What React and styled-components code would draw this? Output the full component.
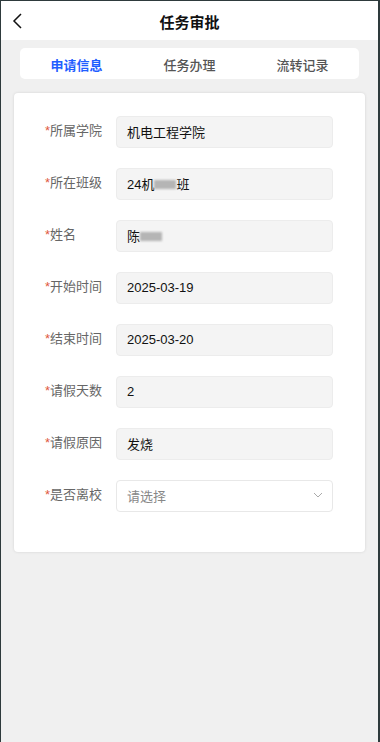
import React from "react";
import styled, { createGlobalStyle } from "styled-components";

const Global = createGlobalStyle`
  html, body { margin: 0; padding: 0; background: #2e3a3c; }
  body { font-family: "Liberation Sans", "Noto Sans CJK SC", sans-serif; }
  * { box-sizing: border-box; }
`;

const Frame = styled.div`
  width: 380px;
  height: 742px;
  border-left: 1px solid #2e3a3c;
  border-right: 2px solid #2e3a3c;
  border-top: 1px solid #2e3a3c;
  background: #f0f0f0;
  display: flex;
  flex-direction: column;
  overflow: hidden;
`;

const Header = styled.div`
  height: 39px;
  background: #fff;
  display: grid;
  grid-template-columns: 40px 1fr 40px;
  align-items: center;
`;

const Back = styled.div`
  display: flex;
  align-items: center;
  padding-left: 11px;
  height: 100%;
`;

const Title = styled.div`
  text-align: center;
  font-size: 15px;
  font-weight: 700;
  color: #111;
  padding-top: 1px;
`;

const Body = styled.div`
  padding: 8px 13px 0 13px;
  display: flex;
  flex-direction: column;
  gap: 14px;
`;

const Tabs = styled.div`
  margin: 0 6px;
  height: 31px;
  background: #fff;
  border-radius: 5px;
  display: grid;
  grid-template-columns: repeat(3, 1fr);
  align-items: center;
`;

const Tab = styled.div`
  text-align: center;
  font-size: 13px;
  font-weight: ${(p) => (p.$active ? 700 : 500)};
  color: ${(p) => (p.$active ? "#1f5eff" : "#555")};
  padding-top: 1px;
`;

const Card = styled.div`
  background: #fff;
  border-radius: 4px;
  box-shadow: 0 0 3px rgba(0, 0, 0, 0.12);
  padding: 23px 32px 40px 31px;
  display: flex;
  flex-direction: column;
  gap: 20px;
`;

const Row = styled.div`
  display: flex;
  align-items: center;
  height: 32px;
`;

const Label = styled.div`
  width: 71px;
  font-size: 13px;
  color: #666;
  flex-shrink: 0;
  margin-top: -6px;
`;

const Star = styled.span`
  color: #e0593d;
`;

const Field = styled.div`
  flex: 1;
  height: 32px;
  border: 1px solid ${(p) => (p.$select ? "#e8e8e8" : "#ececec")};
  background: ${(p) => (p.$select ? "#fff" : "#f4f4f4")};
  border-radius: 4px;
  display: flex;
  align-items: center;
  justify-content: space-between;
  padding: 0 9px 2px 10px;
  font-size: 13px;
  color: ${(p) => (p.$placeholder ? "#888" : "#111")};
`;

const Value = styled.span`
  white-space: nowrap;
`;

const Redact = styled.span`
  display: inline-block;
  width: ${(p) => p.$w}px;
  height: 9px;
  background: #b5b5b5;
  filter: blur(1px);
  vertical-align: middle;
  margin-top: -2px;
`;

const rows = [
  { label: "所属学院", value: "机电工程学院" },
  { label: "所在班级", value: <>24机<Redact $w={22} />班</> },
  { label: "姓名", value: <>陈<Redact $w={22} /></> },
  { label: "开始时间", value: "2025-03-19" },
  { label: "结束时间", value: "2025-03-20" },
  { label: "请假天数", value: "2" },
  { label: "请假原因", value: "发烧" },
];

export default function App() {
  return (
    <>
      <Global />
      <Frame>
        <Header>
          <Back>
            <svg width="12" height="18" viewBox="0 0 12 18">
              <path d="M9 2 L2 9 L9 16" fill="none" stroke="#111" strokeWidth="1.5" />
            </svg>
          </Back>
          <Title>任务审批</Title>
          <div />
        </Header>
        <Body>
          <Tabs>
            <Tab $active>申请信息</Tab>
            <Tab>任务办理</Tab>
            <Tab>流转记录</Tab>
          </Tabs>
          <Card>
            {rows.map((r) => (
              <Row key={r.label}>
                <Label><Star>*</Star>{r.label}</Label>
                <Field><Value>{r.value}</Value></Field>
              </Row>
            ))}
            <Row>
              <Label><Star>*</Star>是否离校</Label>
              <Field $select $placeholder>
                <Value>请选择</Value>
                <svg width="10" height="6" viewBox="0 0 10 6">
                  <path d="M1 1 L5 5 L9 1" fill="none" stroke="#aaa" strokeWidth="1" />
                </svg>
              </Field>
            </Row>
          </Card>
        </Body>
      </Frame>
    </>
  );
}
